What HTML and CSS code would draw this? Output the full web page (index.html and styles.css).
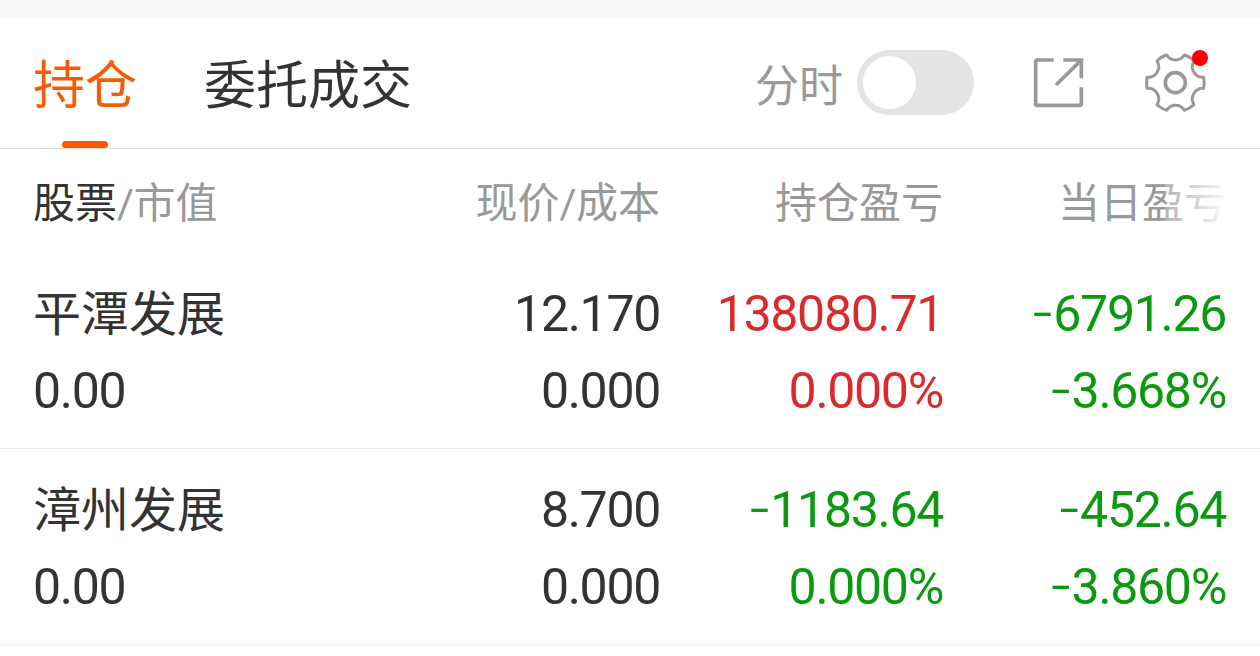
FILE: index.html
```html
<!DOCTYPE html>
<html lang="zh-CN">
<head>
<meta charset="utf-8">
<title>持仓</title>
<link rel="stylesheet" href="styles.css">
</head>
<body>
<div class="strip"></div>
<header class="bar">
  <nav class="tabs">
    <a class="tab tab-active">持仓</a>
    <a class="tab">委托成交</a>
  </nav>
  <div class="tools">
    <span class="label">分时</span>
    <span class="toggle"><span class="knob"></span></span>
    <svg class="share" viewBox="0 0 162 162" fill="none" stroke="#999" stroke-width="11">
      <path d="M68 15H19Q14 15 14 20V146Q14 151 19 151H146Q151 151 151 146V97"/>
      <path d="M97 15H151V70M151 15L75 90"/>
    </svg>
    <span class="settings">
      <svg class="gear" viewBox="0 0 198 198" fill="none" stroke="#999" stroke-width="9" stroke-linejoin="round">
        <path d="M71 15A31 31 0 0 0 124 15Q141 20 153 33A32 32 0 0 0 182 82Q185 98 182 115A32 32 0 0 0 153 164Q141 176 124 181A31 31 0 0 0 71 181Q54 176 42 164A32 32 0 0 0 12 115Q10 98 12 82A32 32 0 0 0 42 33Q54 20 71 15Z"/>
        <circle cx="97" cy="98" r="30" stroke-width="11"/>
      </svg>
      <span class="dot"></span>
    </span>
  </div>
</header>
<main>
  <div class="grid head">
    <div><span class="strong">股票</span><span class="slash">/</span>市值</div>
    <div>现价<span class="slash">/</span>成本</div>
    <div>持仓盈亏</div>
    <div class="fade">当日盈亏</div>
  </div>
  <section class="grid row">
    <div class="name">平潭发展</div>
    <div>12.170</div>
    <div class="up">138080.71</div>
    <div class="down"><span class="minus">-</span>6791.26</div>
    <div>0.00</div>
    <div>0.000</div>
    <div class="up">0.000%</div>
    <div class="down"><span class="minus">-</span>3.668%</div>
  </section>
  <section class="grid row">
    <div class="name">漳州发展</div>
    <div>8.700</div>
    <div class="down"><span class="minus">-</span>1183.64</div>
    <div class="down"><span class="minus">-</span>452.64</div>
    <div>0.00</div>
    <div>0.000</div>
    <div class="down">0.000%</div>
    <div class="down"><span class="minus">-</span>3.860%</div>
  </section>
</main>
</body>
</html>
```
FILE: styles.css
```css
* { box-sizing: border-box; }
body {
  margin: 0;
  background: #fff;
  color: #333;
  font-family: "Noto Sans CJK SC", sans-serif;
}
.strip { height: 18px; background: #f7f7fa; }
.bar {
  height: 131px;
  display: flex;
  justify-content: space-between;
  padding: 0 51px 0 33px;
  border-bottom: 1px solid #dedede;
}
.tabs { display: flex; gap: 67px; }
.tab {
  position: relative;
  font-size: 52px;
  line-height: 128px;
  height: 130px;
}
.tab-active { color: #fb5a05; }
.tab-active::after {
  content: "";
  position: absolute;
  left: 29px;
  bottom: 0;
  width: 46px;
  height: 7px;
  border-radius: 4px;
  background: #fb5a05;
}
.tools { display: flex; align-items: center; height: 129px; }
.label {
  font-size: 44px;
  line-height: 60px;
  margin-right: 14px;
  color: #999;
}
.toggle {
  width: 117px;
  height: 65px;
  padding: 6px;
  border-radius: 33px;
  background: #e4e4e6;
}
.knob {
  display: block;
  width: 53px;
  height: 53px;
  border-radius: 50%;
  background: #fff;
}
.share { width: 54px; height: 54px; margin-left: 57px; margin-bottom: 2px; }
.settings { position: relative; margin-left: 58px; height: 66px; }
.gear { display: block; width: 66px; height: 66px; }
.dot {
  position: absolute;
  left: 49px;
  top: 0;
  width: 16px;
  height: 16px;
  border-radius: 50%;
  background: #f00;
}
.grid {
  display: grid;
  grid-template-columns: 344px 283px 283px 283px;
  padding: 0 34px 0 33px;
  text-align: right;
  white-space: nowrap;
}
.grid > :nth-child(4n + 1) { text-align: left; }
.head {
  height: 104px;
  font-size: 42px;
  line-height: 101px;
  color: #999;
}
.strong { color: #333; }
.slash { font-family: Roboto, sans-serif; font-size: 41px; line-height: 1; letter-spacing: -0.5px; }
.fade { position: relative; }
.fade::after {
  content: "";
  position: absolute;
  top: 0;
  right: -34px;
  width: 95px;
  height: 100%;
  background: linear-gradient(to right, rgba(255,255,255,.25), #fff 70%);
}
.row {
  height: 196px;
  padding-top: 23px;
  grid-auto-rows: 77px;
  align-content: start;
  border-bottom: 1px solid #ebebeb;
  font-family: Roboto, sans-serif;
  font-size: 50px;
  line-height: 77px;
  letter-spacing: -1.3px;
}
.row .name {
  font-family: "Noto Sans CJK SC", sans-serif;
  font-size: 48px;
  line-height: 69px;
  letter-spacing: 0;
}
.minus {
  font-family: Inter, sans-serif;
  font-size: 54px;
  font-weight: 300;
  line-height: 1;
}
.up { color: #d92b2b; }
.down { color: #0b990f; }
```
